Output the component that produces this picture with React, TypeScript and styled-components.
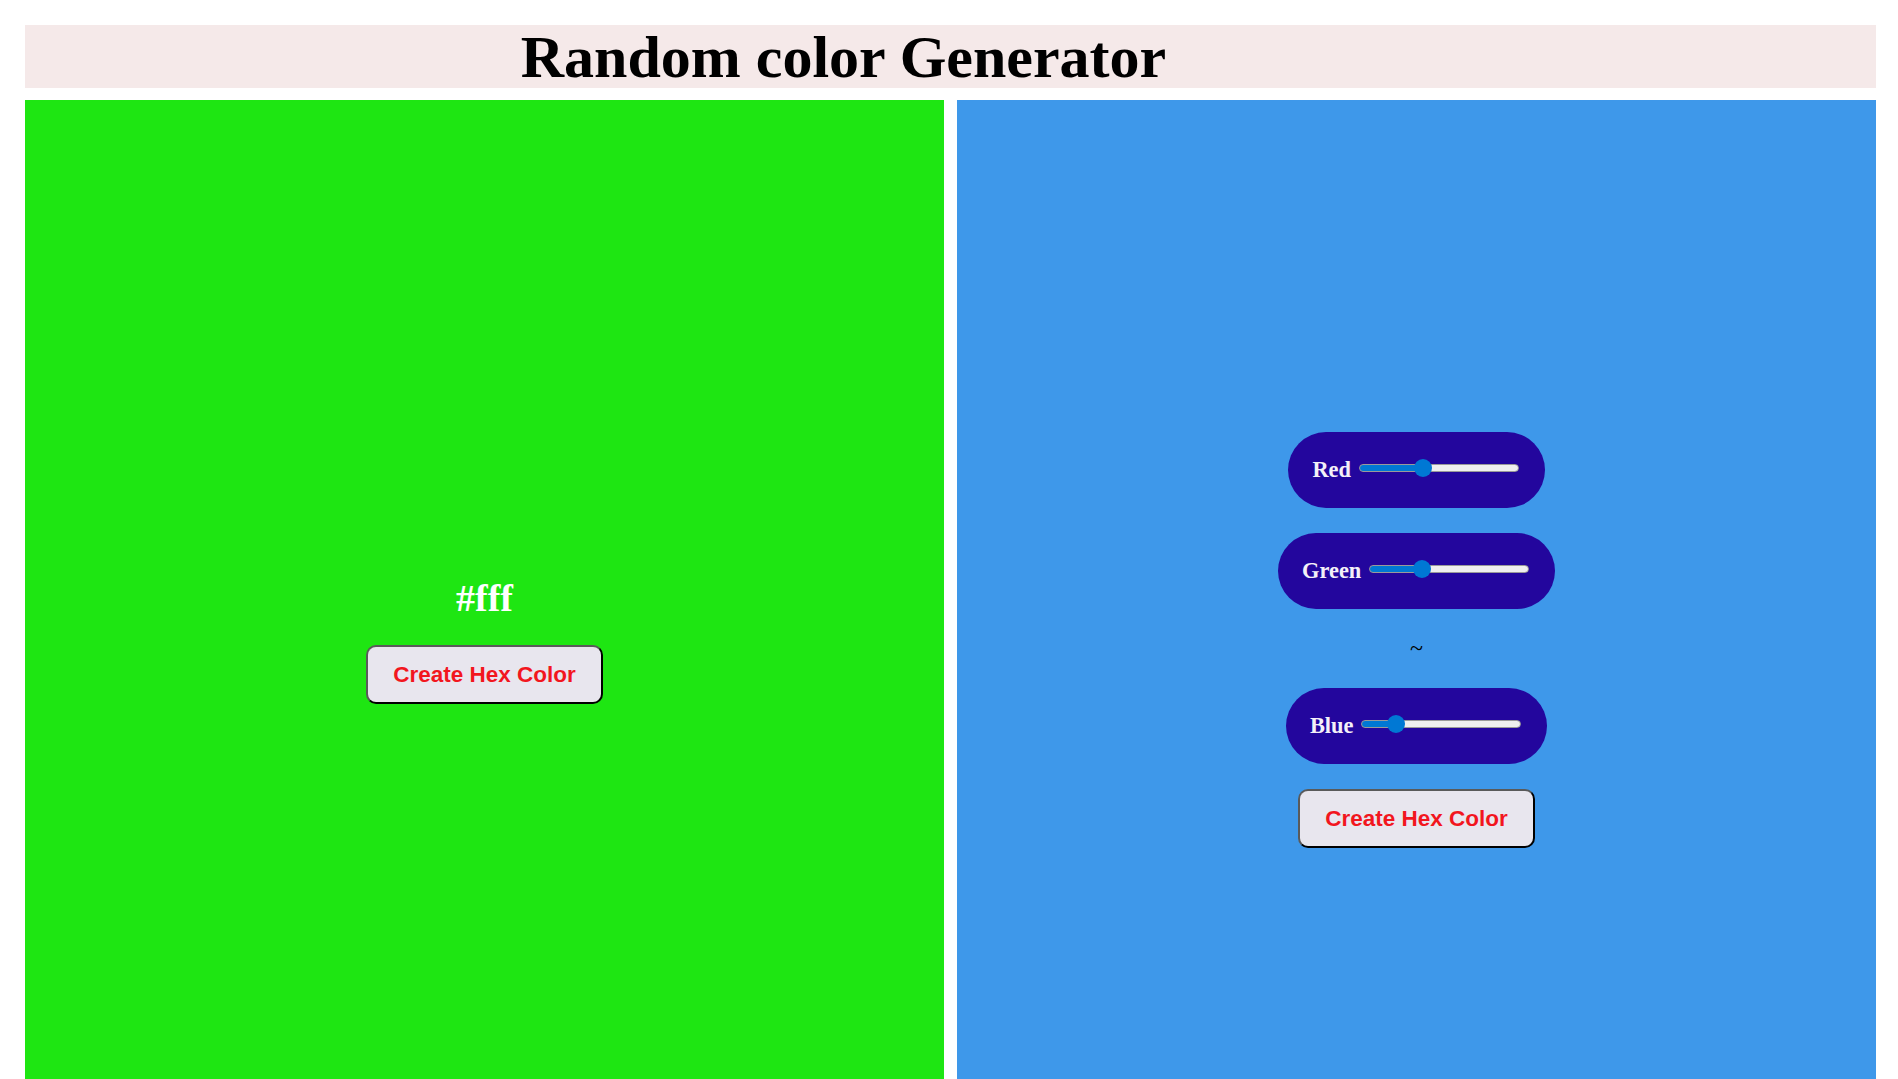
import React, { useState } from "react";
import styled, { createGlobalStyle } from "styled-components";

const Global = createGlobalStyle`
  html { scrollbar-width: none; }
  html::-webkit-scrollbar { display: none; }
  body {
    margin: 0;
    background: #ffffff;
    font-family: "Liberation Serif", "Times New Roman", serif;
  }
`;

const Page = styled.div`
  padding: 25px 22px 0 25px;
  display: flex;
  flex-direction: column;
  gap: 12px;
`;

const Header = styled.header`
  background: #f5e9e9;
  height: 63px;
  text-align: center;
  padding-right: 214px;
`;

const Title = styled.h1`
  margin: 0;
  padding-top: 2px;
  font-family: "Liberation Serif", "Times New Roman", serif;
  font-weight: 700;
  font-size: 60px;
  line-height: 61px;
  color: #000;
`;

const Panels = styled.main`
  display: grid;
  grid-template-columns: 1fr 1fr;
  gap: 13px;
`;

const Panel = styled.section<{ $bg: string }>`
  background: ${(p) => p.$bg};
  height: 100vh;
  display: flex;
  flex-direction: column;
  align-items: center;
  justify-content: center;
  gap: 25px;
`;

const HexText = styled.h2`
  margin: 0;
  font-family: "Liberation Serif", "Times New Roman", serif;
  font-weight: 700;
  font-size: 38px;
  color: #ffffff;
`;

const HexButton = styled.button`
  font-family: "Liberation Sans", Arial, sans-serif;
  font-weight: 700;
  font-size: 22.5px;
  line-height: 25px;
  color: #f2161e;
  background: #e8e6ee;
  border: 2px solid;
  border-color: #5a5a5a #000 #000 #5a5a5a;
  border-radius: 10px;
  padding: 15px 25px;
  cursor: pointer;
`;

const SliderPill = styled.div`
  background: #23069d;
  border-radius: 38px;
  padding: 25px 24px;
  white-space: nowrap;
`;

const SliderLabel = styled.label`
  font-family: "Liberation Serif", "Times New Roman", serif;
  font-weight: 700;
  font-size: 22.4px;
  color: #f4f0f8;
`;

const Range = styled.input`
  -webkit-appearance: none;
  appearance: none;
  width: 160px;
  height: 18px;
  margin: 1px 2px;
  background: transparent;
  cursor: pointer;

  &::-webkit-slider-runnable-track {
    height: 8px;
    border-radius: 5px;
    border: 1px solid #9a9a9a;
    background: linear-gradient(
      to right,
      #0078d4 0,
      #0078d4 var(--fill),
      #efefef var(--fill),
      #efefef 100%
    );
  }

  &::-webkit-slider-thumb {
    -webkit-appearance: none;
    appearance: none;
    width: 18px;
    height: 18px;
    border-radius: 50%;
    background: #0078d4;
    border: none;
    margin-top: -6px;
  }
`;

const Tilde = styled.div`
  font-family: "Liberation Serif", "Times New Roman", serif;
  font-size: 24px;
  line-height: 29px;
  color: #000;
`;

function Slider({ name, value, onChange }: { name: string; value: number; onChange: (v: number) => void }) {
  const fill = 9 + (value / 255) * (160 - 18);
  return (
    <SliderPill>
      <SliderLabel>
        {name}{" "}
        <Range
          type="range"
          min={0}
          max={255}
          value={value}
          style={{ ["--fill" as string]: `${fill}px` } as React.CSSProperties}
          onChange={(e) => onChange(Number(e.target.value))}
        />
      </SliderLabel>
    </SliderPill>
  );
}

export default function App() {
  const [r, setR] = useState(100);
  const [g, setG] = useState(79);
  const [b, setB] = useState(46);
  return (
    <>
      <Global />
      <Page>
        <Header>
          <Title>Random color Generator</Title>
        </Header>
        <Panels>
          <Panel $bg="#1ee612">
            <HexText>#fff</HexText>
            <HexButton>Create Hex Color</HexButton>
          </Panel>
          <Panel $bg="#3e98ea">
            <Slider name="Red" value={r} onChange={setR} />
            <Slider name="Green" value={g} onChange={setG} />
            <Tilde>~</Tilde>
            <Slider name="Blue" value={b} onChange={setB} />
            <HexButton>Create Hex Color</HexButton>
          </Panel>
        </Panels>
      </Page>
    </>
  );
}
